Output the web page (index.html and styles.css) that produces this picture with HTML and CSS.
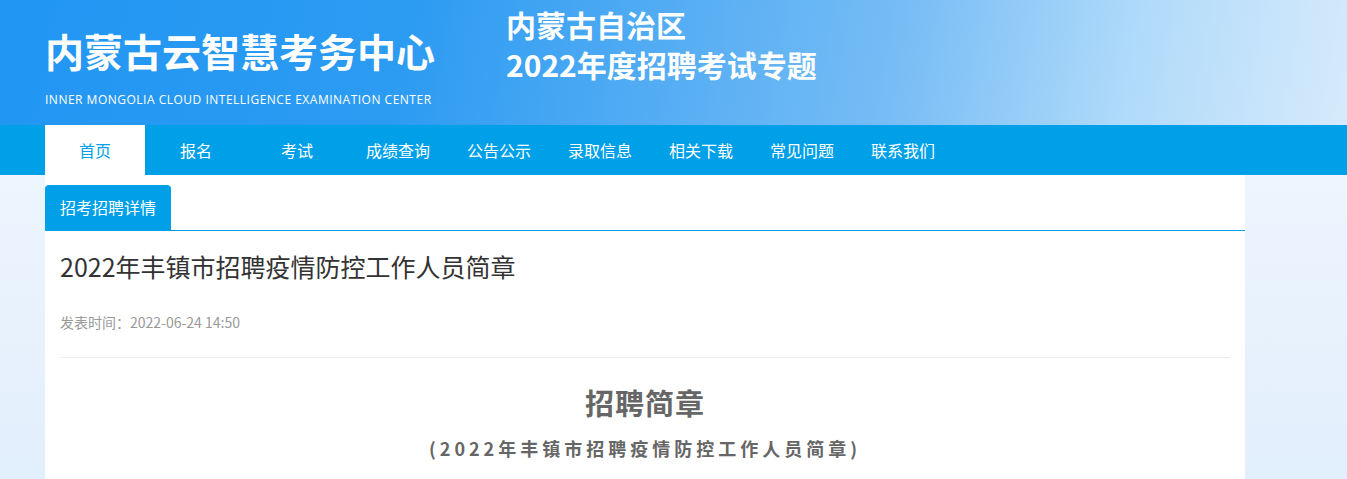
FILE: index.html
```html
<!DOCTYPE html>
<html lang="zh-CN">
<head>
    <meta charset="UTF-8">
    <meta name="viewport" content="width=device-width, initial-scale=1.0">
    <title>2022年丰镇市招聘疫情防控工作人员简章</title>
    <link rel="stylesheet" href="styles.css">
</head>
<body>
    <div class="header">
        <div class="wrap header-inner">
            <div class="logo">
                <h1>内蒙古云智慧考务中心</h1>
                <p>INNER MONGOLIA CLOUD INTELLIGENCE EXAMINATION CENTER</p>
            </div>
            <div class="topic">
                内蒙古自治区<br>
                2022年度招聘考试专题
            </div>
        </div>
    </div>

    <div class="nav">
        <ul class="wrap">
            <li class="active"><a href="#">首页</a></li>
            <li><a href="#">报名</a></li>
            <li><a href="#">考试</a></li>
            <li><a href="#">成绩查询</a></li>
            <li><a href="#">公告公示</a></li>
            <li><a href="#">录取信息</a></li>
            <li><a href="#">相关下载</a></li>
            <li><a href="#">常见问题</a></li>
            <li><a href="#">联系我们</a></li>
        </ul>
    </div>

    <div class="wrap main">
        <div class="tabs">
            <span class="tab">招考招聘详情</span>
        </div>
        <div class="article">
            <h2 class="title">2022年丰镇市招聘疫情防控工作人员简章</h2>
            <div class="meta">发表时间：2022-06-24 14:50</div>
            <div class="body">
                <h3>招聘简章</h3>
                <h4>(2022年丰镇市招聘疫情防控工作人员简章)</h4>
            </div>
        </div>
    </div>
</body>
</html>
```

FILE: styles.css
```css
* {
    box-sizing: border-box;
}
body {
    margin: 0;
    min-height: 479px;
    font-family: "Noto Sans CJK SC", "Noto Sans", sans-serif;
    background: linear-gradient(to bottom, #f3f8ff, #e2effc);
}
.wrap {
    width: 1200px;
    margin-left: 45px;
}

/* header */
.header {
    height: 125px;
    background: linear-gradient(100deg, #2196f3 0%, #2c9bf2 30%, #76bcf5 66%, #b1dbfa 84%, #d6eafb 100%);
    color: #fff;
}
.header-inner {
    display: flex;
    height: 125px;
}
.logo {
    width: 461px;
    padding-top: 27px;
}
.logo h1 {
    margin: 0;
    font-size: 39px;
    line-height: 46px;
    font-weight: bold;
}
.logo p {
    margin: 20px 0 0;
    font-family: "Open Sans", "Noto Sans", sans-serif;
    font-size: 12px;
    line-height: 14px;
    letter-spacing: 0.5px;
}
.topic {
    padding-top: 4px;
    font-size: 30px;
    line-height: 40px;
    font-weight: bold;
}

/* nav */
.nav {
    height: 50px;
    background: #00a0e9;
}
.nav ul {
    display: flex;
    list-style: none;
    padding: 0;
    margin-top: 0;
    margin-bottom: 0;
    height: 50px;
}
.nav li {
    width: 100px;
    margin-right: 1px;
    text-align: center;
}
.nav a {
    display: block;
    line-height: 50px;
    color: #fff;
    font-size: 16px;
    text-decoration: none;
}
.nav li.active {
    background: #fff;
}
.nav li.active a {
    color: #00a0e9;
}

/* main */
.main {
    background: #fff;
    padding-top: 10px;
    min-height: 304px;
}
.tabs {
    border-bottom: 1px solid #00a0e9;
    height: 46px;
}
.tab {
    display: inline-block;
    height: 45px;
    line-height: 45px;
    padding: 0 15px;
    background: #00a0e9;
    color: #fff;
    font-size: 16px;
    border-radius: 4px 4px 0 0;
}
.article {
    padding: 0 15px;
}
.title {
    margin: 0;
    padding-top: 18px;
    font-size: 25px;
    line-height: 34px;
    font-weight: normal;
    color: #333;
}
.meta {
    margin-top: 30px;
    font-size: 14px;
    line-height: 18px;
    color: #999;
    padding-bottom: 26px;
    border-bottom: 1px solid #eee;
}
.body {
    text-align: center;
    color: #666;
}
.body h3 {
    margin: 26px 0 0;
    font-size: 29px;
    line-height: 36px;
    font-weight: bold;
    letter-spacing: 1px;
}
.body h4 {
    margin: 15px 0 0;
    font-size: 18px;
    line-height: 26px;
    font-weight: bold;
    letter-spacing: 4px;
}
```
